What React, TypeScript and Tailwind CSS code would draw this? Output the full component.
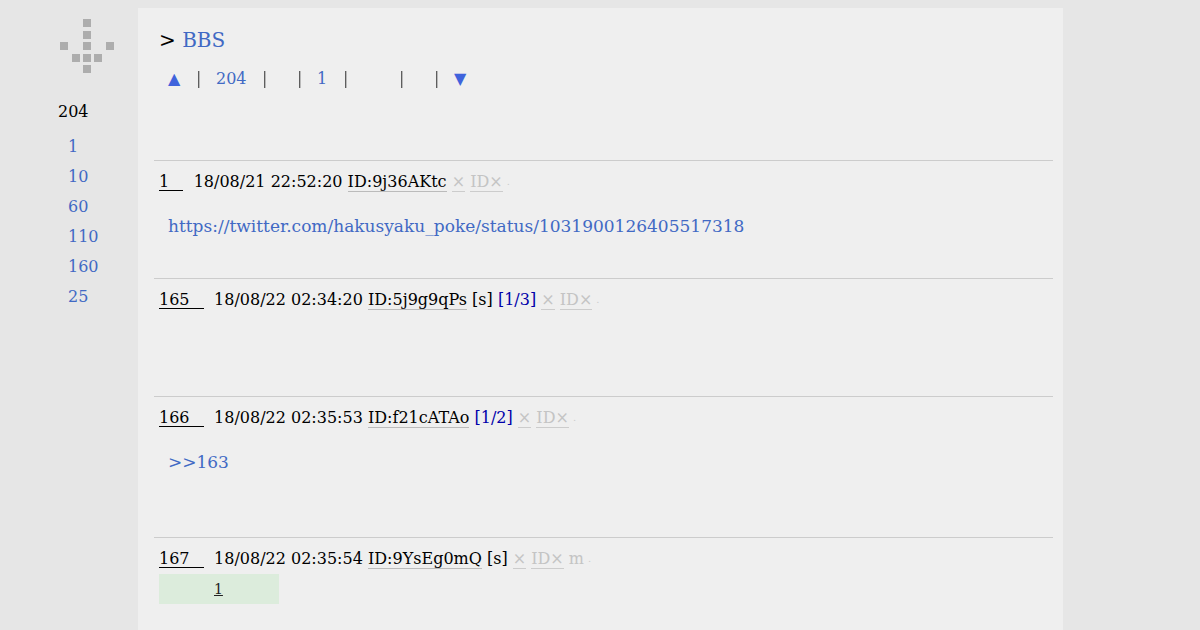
const menu = ["1", "10", "60", "110", "160", "25"];

const logoCells = [
  [23, 0],
  [23, 12],
  [0, 23],
  [23, 23],
  [46, 23],
  [12, 35],
  [23, 35],
  [34, 35],
  [23, 46],
];

function Logo() {
  return (
    <svg width="54" height="54" viewBox="0 0 54 54" className="block" aria-hidden="true">
      {logoCells.map(([x, y]) => (
        <rect key={`${x}-${y}`} x={x} y={y} width="8" height="8" fill="#adadad" />
      ))}
    </svg>
  );
}

function Sep() {
  return <span className="w-[5px] shrink-0 text-[#555] will-change-transform">|</span>;
}

function PostHead(props: {
  num: string;
  date: string;
  id: string;
  s?: boolean;
  count?: string;
  m?: boolean;
}) {
  return (
    <div className="flex h-[20px] items-center whitespace-pre pl-[5px] leading-[20px] text-black">
      <span className="inline-block border-b border-black pr-[14px] leading-[16px]">{props.num}</span>
      <span className="ml-[10.5px]">{props.date} </span>
      <span className="border-b border-[#bbb] leading-[18px]">ID:{props.id}</span>
      {props.s && <span> [s]</span>}
      {props.count && <span className="text-[#00a]"> {props.count}</span>}
      <span> </span>
      <span className="border-b border-[#ccc] leading-[18px] text-[#c4c4c4]">×</span>
      <span> </span>
      <span className="border-b border-[#ccc] leading-[18px] text-[#c4c4c4]">ID×</span>
      {props.m && <span className="text-[#c4c4c4]"> m</span>}
      <span className="ml-[4px] text-[10px] text-[#ccc]">.</span>
    </div>
  );
}

export default function App() {
  return (
    <div className="flex h-[630px] overflow-hidden bg-[#e6e6e6] font-['DejaVu_Serif',serif] text-[16px]">
      <aside className="w-[138px] shrink-0 pl-[60px] pt-[19px]">
        <Logo />
        <div className="ml-[-2px] mt-[27px] leading-[24px] text-black">204</div>
        <ul className="ml-[8px] mt-[8px] text-[#4169c4]">
          {menu.map((m) => (
            <li key={m} className="h-[30px] leading-[30px]">
              {m}
            </li>
          ))}
        </ul>
      </aside>

      <main className="mt-[8px] w-[925px] shrink-0 bg-[#efefef] pl-[16px] pr-[10px]">
        <h1 className="mt-[18px] pl-[5px] text-[20px] leading-[28px] font-normal">
          <span className="text-black">&gt; </span>
          <span className="text-[#4169c4]">BBS</span>
        </h1>
        <nav className="mt-[13px] flex h-[24px] items-center pl-[14px] leading-[24px] text-[#4169c4]">
          <span className="w-[28px] text-[#3f63dc]">▲</span>
          <Sep />
          <span className="ml-[15px] w-[46px]">204</span>
          <Sep />
          <span className="w-[30px]" />
          <Sep />
          <span className="ml-[15px] w-[26px]">1</span>
          <Sep />
          <span className="w-[51px]" />
          <Sep />
          <span className="w-[30px]" />
          <Sep />
          <span className="ml-[15px] text-[#3f63dc]">▼</span>
        </nav>

        <section className="mt-[69px] h-[118px] border-t border-[#ccc] pt-[11px]">
          <PostHead num="1" date="18/08/21 22:52:20" id="9j36AKtc" />
          <p className="mt-[24px] pl-[14px] text-[17px] leading-[20px] text-[#4169c4]">
            https://twitter.com/hakusyaku_poke/status/1031900126405517318
          </p>
        </section>

        <section className="h-[118px] border-t border-[#ccc] pt-[11px]">
          <PostHead num="165" date="18/08/22 02:34:20" id="5j9g9qPs" s count="[1/3]" />
        </section>

        <section className="h-[141px] border-t border-[#ccc] pt-[11px]">
          <PostHead num="166" date="18/08/22 02:35:53" id="f21cATAo" count="[1/2]" />
          <p className="mt-[24px] pl-[14px] text-[17px] leading-[20px] text-[#4169c4]">&gt;&gt;163</p>
        </section>

        <section className="border-t border-[#ccc] pt-[11px]">
          <PostHead num="167" date="18/08/22 02:35:54" id="9YsEg0mQ" s m />
          <div className="ml-[5px] mt-[5px] h-[30px] w-[120px] bg-[#dcecdc] pl-[55px] text-[14px] leading-[30px] text-[#222] underline">
            1
          </div>
        </section>
      </main>
    </div>
  );
}
